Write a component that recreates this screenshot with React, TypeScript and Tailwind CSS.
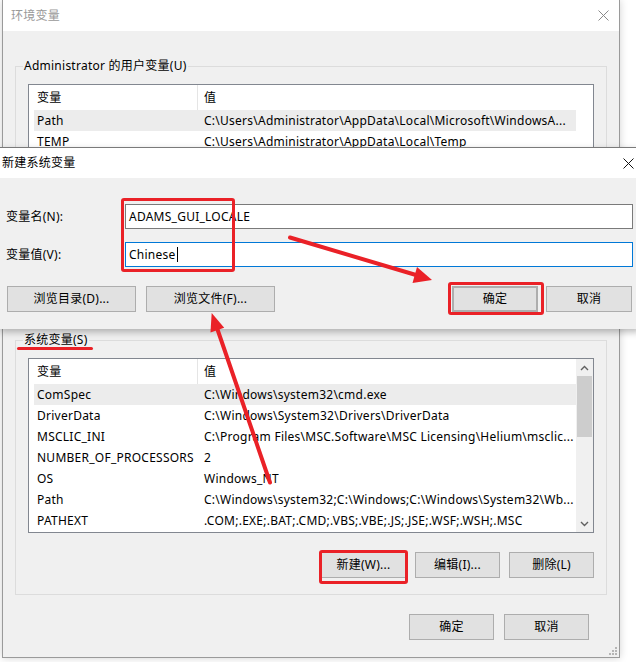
import React from "react";
import clsx from "clsx";

type Row = { name: string; value: string; selected?: boolean };

const userRows: Row[] = [
  { name: "Path", value: "C:\\Users\\Administrator\\AppData\\Local\\Microsoft\\WindowsA...", selected: true },
  { name: "TEMP", value: "C:\\Users\\Administrator\\AppData\\Local\\Temp" },
];

const sysRows: Row[] = [
  { name: "ComSpec", value: "C:\\Windows\\system32\\cmd.exe", selected: true },
  { name: "DriverData", value: "C:\\Windows\\System32\\Drivers\\DriverData" },
  { name: "MSCLIC_INI", value: "C:\\Program Files\\MSC.Software\\MSC Licensing\\Helium\\msclic..." },
  { name: "NUMBER_OF_PROCESSORS", value: "2" },
  { name: "OS", value: "Windows_NT" },
  { name: "Path", value: "C:\\Windows\\system32;C:\\Windows;C:\\Windows\\System32\\Wb..." },
  { name: "PATHEXT", value: ".COM;.EXE;.BAT;.CMD;.VBS;.VBE;.JS;.JSE;.WSF;.WSH;.MSC" },
];

const Chevron = ({ down }: { down?: boolean }) => (
  <svg width="9" height="6" viewBox="0 0 9 6" className={down ? "rotate-180" : ""}>
    <path d="M1 5 L4.5 1.5 L8 5" fill="none" stroke="#606060" strokeWidth="1.4" />
  </svg>
);

const CloseX = ({ color }: { color: string }) => (
  <svg width="11" height="11" viewBox="0 0 11 11">
    <path d="M0.5 0.5 L10.5 10.5 M10.5 0.5 L0.5 10.5" stroke={color} strokeWidth="1" />
  </svg>
);

function VarList({ rows, scrollbar }: { rows: Row[]; scrollbar?: boolean }) {
  return (
    <div className="flex h-[175px] overflow-hidden border border-[#828790] bg-white">
      <div className="min-w-0 flex-1 pl-[5px]">
        <div className="flex h-[25px]">
          <div className="flex w-[164px] items-center border-r border-[#e5e5e5] pl-[3px]">变量</div>
          <div className="flex items-center pl-[6px]">值</div>
        </div>
        {rows.map((r, i) => (
          <div key={i} className={clsx("flex h-[21px] items-center", r.selected && "bg-[#ececec]")}>
            <div className="w-[164px] shrink-0 whitespace-nowrap pl-[3px]">{r.name}</div>
            <div className="overflow-hidden whitespace-nowrap pl-[6px]">{r.value}</div>
          </div>
        ))}
      </div>
      <div className={clsx("flex w-[17px] flex-col", scrollbar && "bg-[#f0f0f0]")}>
        {scrollbar && (
          <>
            <div className="flex h-[17px] items-center justify-center">
              <Chevron />
            </div>
            <div className="mx-[1px] h-[61px] bg-[#cdcdcd]" />
            <div className="flex-1" />
            <div className="flex h-[17px] items-center justify-center">
              <Chevron down />
            </div>
          </>
        )}
      </div>
    </div>
  );
}

const Btn = ({ children, className }: { children: React.ReactNode; className?: string }) => (
  <div
    className={clsx(
      "flex h-[26px] items-center justify-center border border-[#adadad] bg-[#e1e1e1]",
      className
    )}
  >
    {children}
  </div>
);

function Group({ title, rows, scrollbar }: { title: string; rows: Row[]; scrollbar?: boolean }) {
  return (
    <fieldset className="border border-[#dcdcdc]">
      <legend className="ml-[7px] px-[1px] leading-[16px]">{title}</legend>
      <div className="px-[12px] pb-[16px] pt-[10px]">
        <VarList rows={rows} scrollbar={scrollbar} />
        <div className="mt-[19px] flex justify-end gap-[9px]">
          <Btn className="w-[85px]">新建(W)...</Btn>
          <Btn className="w-[85px]">编辑(I)...</Btn>
          <Btn className="w-[85px]">删除(L)</Btn>
        </div>
      </div>
    </fieldset>
  );
}

export default function App() {
  return (
    <div className="relative h-[662px] w-[636px] overflow-hidden bg-white font-['Noto_Sans','Noto_Sans_CJK_SC',sans-serif] text-[12px] tracking-[0.25px] text-black">
      {/* 环境变量 window */}
      <div className="relative ml-[2px] h-[658px] w-[618px] border-x border-b border-[#9a9a9a] bg-[#f0f0f0] shadow-[0_0_8px_rgba(0,0,0,0.18)]">
        <div className="flex h-[31px] items-center justify-between bg-white pl-[8px] pr-[10px] text-[#999]">
          <span>环境变量</span>
          <CloseX color="#8a8a8a" />
        </div>
        <div className="px-[12px] pt-[27px]">
          <Group title="Administrator 的用户变量(U)" rows={userRows} />
          <div className="mt-[11px]">
            <Group title="系统变量(S)" rows={sysRows} scrollbar />
          </div>
          <div className="mr-[18px] mt-[19px] flex justify-end gap-[10px]">
            <Btn className="w-[85px]">确定</Btn>
            <Btn className="w-[85px]">取消</Btn>
          </div>
        </div>
        <svg className="absolute bottom-[2px] right-[2px]" width="10" height="10" viewBox="0 0 10 10">
          {[
            [8, 0], [8, 3], [5, 3], [8, 6], [5, 6], [2, 6],
          ].map(([x, y], i) => (
            <rect key={i} x={x} y={y + 2} width="2" height="2" fill="#b5b5b5" />
          ))}
        </svg>
      </div>

      {/* 新建系统变量 dialog */}
      <div className="absolute left-0 top-[147px] w-[640px] border-t border-[#7a7a7a] shadow-[0_3px_7px_rgba(0,0,0,0.28)]">
        <div className="flex h-[30px] items-center justify-between bg-white pl-[2px] pr-[6px]">
          <span>新建系统变量</span>
          <CloseX color="#111" />
        </div>
        <div className="bg-[#f0f0f0] pb-[17px] pt-[26px]">
          <div className="flex items-center">
            <div className="w-[125px] pl-[6px]">变量名(N):</div>
            <div className="flex h-[25px] w-[508px] items-center border border-[#7a7a7a] bg-white pl-[3px]">
              ADAMS_GUI_LOCALE
            </div>
          </div>
          <div className="mt-[13px] flex items-center">
            <div className="w-[125px] pl-[6px]">变量值(V):</div>
            <div className="flex h-[25px] w-[508px] items-center border border-[#0078d7] bg-white pl-[3px]">
              Chinese
              <span className="ml-[1px] inline-block h-[15px] w-[1px] bg-black" />
            </div>
          </div>
          <div className="mt-[19px] flex justify-between pl-[7px] pr-[8px]">
            <div className="flex gap-[10px]">
              <Btn className="w-[129px]">浏览目录(D)...</Btn>
              <Btn className="w-[129px]">浏览文件(F)...</Btn>
            </div>
            <div className="flex gap-[8px]">
              <Btn className="w-[86px] border-2 border-[#0078d7]">确定</Btn>
              <Btn className="w-[86px]">取消</Btn>
            </div>
          </div>
        </div>
      </div>

      {/* red annotations */}
      <div className="pointer-events-none absolute left-[121px] top-[198px] h-[74px] w-[114px] rounded-[3px] border-[3px] border-[#ea2127]" />
      <div className="pointer-events-none absolute left-[448px] top-[282px] h-[33px] w-[96px] rounded-[3px] border-[3px] border-[#ea2127]" />
      <div className="pointer-events-none absolute left-[319px] top-[550px] h-[34px] w-[89px] rounded-[3px] border-[3px] border-[#ea2127]" />
      <div className="pointer-events-none absolute left-[17px] top-[347px] h-[3px] w-[76px] rounded-full bg-[#ea2127]" />
      <svg className="pointer-events-none absolute left-0 top-0" width="636" height="662" viewBox="0 0 636 662">
        <line x1="290" y1="237.5" x2="416" y2="275" stroke="#ea2127" strokeWidth="4" strokeLinecap="round" />
        <polygon points="432,280 412.5,283 417,267" fill="#ea2127" />
        <line x1="270" y1="482.5" x2="217" y2="328" stroke="#ea2127" strokeWidth="4" strokeLinecap="round" />
        <polygon points="211.7,313 210.5,332.5 224.2,327.8" fill="#ea2127" />
      </svg>
    </div>
  );
}
